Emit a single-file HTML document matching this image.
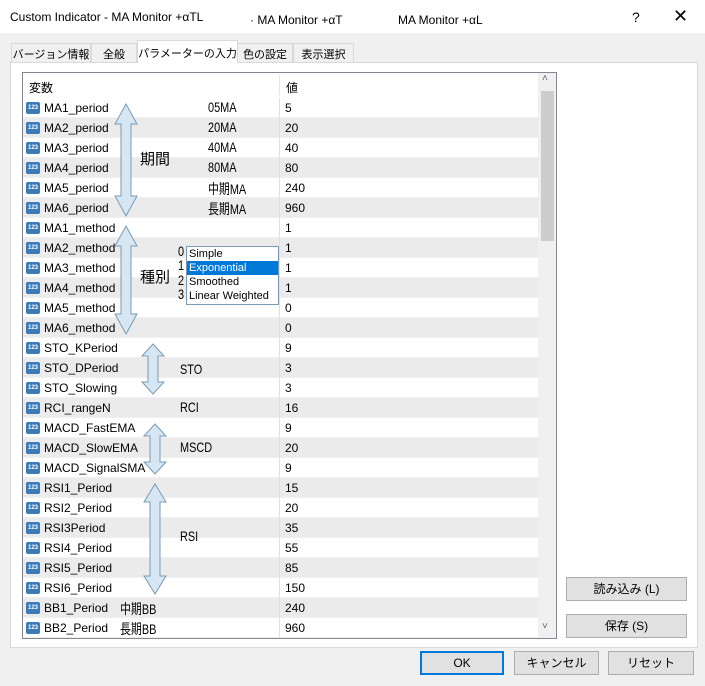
<!DOCTYPE html>
<html><head><meta charset="utf-8"><style>
*{margin:0;padding:0;box-sizing:border-box}
body{width:705px;height:686px;background:#f0f0f0;position:relative;overflow:hidden;font-family:"Liberation Sans","Noto Sans CJK JP",sans-serif;font-size:12px;color:#000}
.a{position:absolute;white-space:nowrap}
.title{left:0;top:0;width:705px;height:33px;background:#fff}
.tab{position:absolute;top:43px;height:20px;border:1px solid #d9d9d9;border-bottom:none;background:#f0f0f0;font-size:11px;padding-top:2px;text-align:center;white-space:nowrap;overflow:hidden}
.panel{left:10px;top:62px;width:688px;height:586px;background:#fff;border:1px solid #d9d9d9}
.list{left:22px;top:72px;width:535px;height:567px;border:1px solid #828790;background:#fff;overflow:hidden}
.row{position:absolute;left:0;width:515px;height:20px;border-bottom:1px solid #f0f0f0;font-size:12px}
.row.g{background:#ebebeb}
.row .ic{position:absolute;left:3px;top:4px;width:14px;height:12px;background:#3d7ab8;border-radius:2px;color:#fff;font-size:6px;font-weight:bold;line-height:12px;text-align:center}
.row .n{position:absolute;left:21px;top:3px}
.row .v{position:absolute;left:262px;top:3px}
.row .d{position:absolute;left:256px;top:0;width:1px;height:20px;background:#e0e0e0}
.btn{position:absolute;height:24px;background:#e1e1e1;border:1px solid #adadad;text-align:center;line-height:22px;font-size:12px}
.ann{position:absolute;font-family:"Liberation Sans","Noto Sans CJK JP",sans-serif;font-size:14px;transform:scaleX(.78);transform-origin:left;white-space:nowrap}
</style></head><body>
<div class="a title"></div>
<div class="a" style="left:10px;top:10px;font-size:12px">Custom Indicator - MA Monitor +αTL</div>
<div class="a" style="left:250px;top:13px;font-size:12px">· MA Monitor +αT</div>
<div class="a" style="left:398px;top:13px;font-size:12px">MA Monitor +αL</div>
<div class="a" style="left:632px;top:9px;font-size:14px">?</div>
<div class="a" style="left:673px;top:6px;font-size:18px">✕</div>
<div class="tab" style="left:11px;width:80px">バージョン情報</div>
<div class="tab" style="left:91px;width:46px">全般</div>
<div class="tab" style="left:237px;width:56px">色の設定</div>
<div class="tab" style="left:293px;width:61px">表示選択</div>
<div class="a panel"></div>
<div class="tab" style="left:137px;top:40px;width:101px;height:23px;background:#fff;z-index:2;padding-top:4px">パラメーターの入力</div>
<div class="a list">
<div class="a" style="left:6px;top:6px">変数</div>
<div class="a" style="left:256px;top:2px;width:1px;height:20px;background:#e5e5e5"></div>
<div class="a" style="left:263px;top:6px">値</div>
<div style="position:absolute;left:0;top:25px">
<div class="row" style="top:0"><span class="ic">123</span><span class="n">MA1_period</span><span class="d"></span><span class="v">5</span></div>
<div class="row g" style="top:20px"><span class="ic">123</span><span class="n">MA2_period</span><span class="d"></span><span class="v">20</span></div>
<div class="row" style="top:40px"><span class="ic">123</span><span class="n">MA3_period</span><span class="d"></span><span class="v">40</span></div>
<div class="row g" style="top:60px"><span class="ic">123</span><span class="n">MA4_period</span><span class="d"></span><span class="v">80</span></div>
<div class="row" style="top:80px"><span class="ic">123</span><span class="n">MA5_period</span><span class="d"></span><span class="v">240</span></div>
<div class="row g" style="top:100px"><span class="ic">123</span><span class="n">MA6_period</span><span class="d"></span><span class="v">960</span></div>
<div class="row" style="top:120px"><span class="ic">123</span><span class="n">MA1_method</span><span class="d"></span><span class="v">1</span></div>
<div class="row g" style="top:140px"><span class="ic">123</span><span class="n">MA2_method</span><span class="d"></span><span class="v">1</span></div>
<div class="row" style="top:160px"><span class="ic">123</span><span class="n">MA3_method</span><span class="d"></span><span class="v">1</span></div>
<div class="row g" style="top:180px"><span class="ic">123</span><span class="n">MA4_method</span><span class="d"></span><span class="v">1</span></div>
<div class="row" style="top:200px"><span class="ic">123</span><span class="n">MA5_method</span><span class="d"></span><span class="v">0</span></div>
<div class="row g" style="top:220px"><span class="ic">123</span><span class="n">MA6_method</span><span class="d"></span><span class="v">0</span></div>
<div class="row" style="top:240px"><span class="ic">123</span><span class="n">STO_KPeriod</span><span class="d"></span><span class="v">9</span></div>
<div class="row g" style="top:260px"><span class="ic">123</span><span class="n">STO_DPeriod</span><span class="d"></span><span class="v">3</span></div>
<div class="row" style="top:280px"><span class="ic">123</span><span class="n">STO_Slowing</span><span class="d"></span><span class="v">3</span></div>
<div class="row g" style="top:300px"><span class="ic">123</span><span class="n">RCI_rangeN</span><span class="d"></span><span class="v">16</span></div>
<div class="row" style="top:320px"><span class="ic">123</span><span class="n">MACD_FastEMA</span><span class="d"></span><span class="v">9</span></div>
<div class="row g" style="top:340px"><span class="ic">123</span><span class="n">MACD_SlowEMA</span><span class="d"></span><span class="v">20</span></div>
<div class="row" style="top:360px"><span class="ic">123</span><span class="n">MACD_SignalSMA</span><span class="d"></span><span class="v">9</span></div>
<div class="row g" style="top:380px"><span class="ic">123</span><span class="n">RSI1_Period</span><span class="d"></span><span class="v">15</span></div>
<div class="row" style="top:400px"><span class="ic">123</span><span class="n">RSI2_Period</span><span class="d"></span><span class="v">20</span></div>
<div class="row g" style="top:420px"><span class="ic">123</span><span class="n">RSI3Period</span><span class="d"></span><span class="v">35</span></div>
<div class="row" style="top:440px"><span class="ic">123</span><span class="n">RSI4_Period</span><span class="d"></span><span class="v">55</span></div>
<div class="row g" style="top:460px"><span class="ic">123</span><span class="n">RSI5_Period</span><span class="d"></span><span class="v">85</span></div>
<div class="row" style="top:480px"><span class="ic">123</span><span class="n">RSI6_Period</span><span class="d"></span><span class="v">150</span></div>
<div class="row g" style="top:500px"><span class="ic">123</span><span class="n">BB1_Period</span><span class="d"></span><span class="v">240</span></div>
<div class="row" style="top:520px"><span class="ic">123</span><span class="n">BB2_Period</span><span class="d"></span><span class="v">960</span></div>
</div>
<div class="a" style="left:515px;top:0;width:18px;height:565px;background:#f0f0f0"></div>
<div class="a" style="left:518px;top:18px;width:13px;height:150px;background:#cdcdcd"></div>
<div class="a" style="left:519px;top:0;font-size:10px;color:#606060">˄</div>
<div class="a" style="left:519px;top:548px;font-size:10px;color:#606060">˅</div>
</div>
<svg class="a" style="left:0;top:0" width="705" height="686">
<g fill="#d6e6f3" stroke="#7a9ab5" stroke-width="1">
<path d="M126 104 L137 124 L131 124 L131 196 L137 196 L126 216 L115 196 L121 196 L121 124 L115 124 Z"/>
<path d="M126 226 L137 246 L131 246 L131 314 L137 314 L126 334 L115 314 L121 314 L121 246 L115 246 Z"/>
<path d="M153 344 L164 356 L158 356 L158 382 L164 382 L153 394 L142 382 L148 382 L148 356 L142 356 Z"/>
<path d="M155 424 L166 436 L160 436 L160 462 L166 462 L155 474 L144 462 L150 462 L150 436 L144 436 Z"/>
<path d="M155 484 L166 502 L160 502 L160 576 L166 576 L155 594 L144 576 L150 576 L150 502 L144 502 Z"/>
</g></svg>
<div class="ann" style="left:208px;top:99px">05MA</div>
<div class="ann" style="left:208px;top:119px">20MA</div>
<div class="ann" style="left:208px;top:139px">40MA</div>
<div class="ann" style="left:208px;top:159px">80MA</div>
<div class="ann" style="left:208px;top:179px">中期MA</div>
<div class="ann" style="left:208px;top:199px">長期MA</div>
<div class="ann" style="left:140px;top:148px;transform:none;font-size:15px">期間</div>
<div class="ann" style="left:140px;top:266px;transform:none;font-size:15px">種別</div>
<div class="ann" style="left:180px;top:361px">STO</div>
<div class="ann" style="left:180px;top:399px">RCI</div>
<div class="ann" style="left:180px;top:439px">MSCD</div>
<div class="ann" style="left:180px;top:528px">RSI</div>
<div class="ann" style="left:120px;top:599px">中期BB</div>
<div class="ann" style="left:120px;top:619px">長期BB</div>
<div class="ann" style="left:178px;top:243px">0</div>
<div class="ann" style="left:178px;top:257px">1</div>
<div class="ann" style="left:178px;top:272px">2</div>
<div class="ann" style="left:178px;top:286px">3</div>
<div class="a" style="left:186px;top:246px;width:93px;height:59px;background:#fff;border:1px solid #7a9ab5;font-size:11px;line-height:14px">
<div style="padding-left:2px">Simple</div>
<div style="padding-left:2px;background:#0078d7;color:#fff">Exponential</div>
<div style="padding-left:2px">Smoothed</div>
<div style="padding-left:2px">Linear Weighted</div>
</div>
<div class="btn" style="left:566px;top:577px;width:121px">読み込み (L)</div>
<div class="btn" style="left:566px;top:614px;width:121px">保存 (S)</div>
<div class="btn" style="left:420px;top:651px;width:84px;border:2px solid #0078d7;line-height:20px">OK</div>
<div class="btn" style="left:514px;top:651px;width:85px">キャンセル</div>
<div class="btn" style="left:608px;top:651px;width:86px">リセット</div>
</body></html>
